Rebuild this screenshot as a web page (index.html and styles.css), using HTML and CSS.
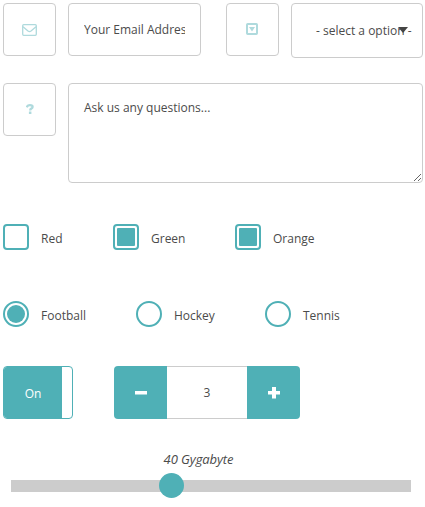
FILE: index.html
```html
<!DOCTYPE html>
<html lang="en">
<head>
<meta charset="utf-8">
<title>Form elements</title>
<link rel="stylesheet" href="styles.css">
</head>
<body>
<form class="form">
  <div class="row row-top">
    <div class="addon">
      <svg width="15" height="12" viewBox="0 0 15 12" fill="none" stroke="currentColor" stroke-width="1.300"><rect x=".7" y=".7" width="13.6" height="10.6" rx="1"/><path d="M1 2.7 6 7q1.500 1.200 3 0l5-4.300"/></svg>
    </div>
    <div class="field email"><span class="clip">Your Email Address</span></div>
    <div class="addon addon-select">
      <svg width="12" height="12" viewBox="0 0 12 12"><rect x="1" y="1" width="10" height="10" rx=".7" fill="none" stroke="currentColor" stroke-width="2"/><path d="M3 4h6L6 8.500z" fill="currentColor"/></svg>
    </div>
    <div class="field select"><span>- select a option -</span>
      <svg class="caret" width="10" height="6" viewBox="0 0 10 6"><path d="M0 0h10L5 6z" fill="currentColor"/></svg>
    </div>
  </div>
  <div class="row row-question">
    <div class="addon addon-help">
      <svg width="8" height="10" viewBox="0 0 8 10"><path d="M.7 3.200Q1.500 1.200 3.900 1.200q2.700 0 2.700 1.700 0 1.100-1.300 1.700-1.100.5-1.100 1.800" fill="none" stroke="currentColor" stroke-width="2.300"/><path d="M2.900 7.500h2.500V10H2.900z" fill="currentColor"/></svg>
    </div>
    <textarea class="field message">Ask us any questions...</textarea>
  </div>
  <div class="choices checks">
    <label class="choice"><span class="mark"></span>Red</label>
    <label class="choice"><span class="mark on"></span>Green</label>
    <label class="choice"><span class="mark on"></span>Orange</label>
  </div>
  <div class="choices radios">
    <label class="choice"><span class="mark on"></span>Football</label>
    <label class="choice"><span class="mark"></span>Hockey</label>
    <label class="choice"><span class="mark"></span>Tennis</label>
  </div>
  <div class="row controls">
    <div class="toggle"><span class="toggle-on">On</span></div>
    <div class="stepper">
      <div class="step"><svg width="12" height="12" viewBox="0 0 12 12"><path d="M0 4h12v3.500H0z" fill="currentColor"/></svg></div>
      <div class="value">3</div>
      <div class="step"><svg width="12" height="12" viewBox="0 0 12 12"><path d="M0 4h4V0h4v4h4v3.500H8V11.500H4V7.500H0z" fill="currentColor"/></svg></div>
    </div>
  </div>
  <div class="range">
    <div class="range-label">40 Gygabyte</div>
    <div class="track"><span class="thumb"></span></div>
  </div>
</form>
</body>
</html>
```
FILE: styles.css
```css
* { box-sizing: border-box; }

body {
  margin: 0;
  background: #fff;
  color: #4b4b4b;
  font: 12px/20px "Open Sans", sans-serif;
}

svg { display: block; }

.form { min-height: 507px; padding: 3px 2px 0 3px; }

.row { display: flex; align-items: flex-start; }
.row-top { height: 80px; }
.row-question { height: 141px; }

.addon {
  display: flex;
  align-items: center;
  justify-content: center;
  flex: none;
  width: 53px;
  height: 53px;
  margin-right: 12px;
  border: 1px solid #ccc;
  border-radius: 4px;
  color: #afdadd;
}
.addon-select { margin-left: 25px; padding: 0 1px 1px 0; }
.addon-help { padding-bottom: 1px; }

.field {
  border: 1px solid #ccc;
  border-radius: 4px;
  background: #fff;
}

.email { width: 133px; height: 53px; padding: 16px 15px; }
.clip { display: block; overflow: hidden; white-space: nowrap; }

.select {
  position: relative;
  width: 132px;
  height: 55px;
  padding: 17px 0 0 24px;
  white-space: nowrap;
}
.caret { position: absolute; top: 23px; right: 14px; color: #444; }

.message {
  display: block;
  width: 355px;
  height: 100px;
  margin: 0;
  padding: 14px 15px;
  color: inherit;
  font: inherit;
  outline: 0;
}

.choices { display: flex; height: 77px; }
.choice { display: flex; align-items: flex-start; line-height: 29px; }
.mark {
  width: 26px;
  height: 26px;
  margin-right: 12px;
  padding: 2px;
  border: 2px solid #4fb0b6;
  border-radius: 4px;
}
.mark.on::before {
  content: "";
  display: block;
  height: 18px;
  border-radius: 1px;
  background: #4fb0b6;
}
.checks .choice { width: 122px; }
.checks .choice:first-child { width: 110px; }
.radios { height: 65px; }
.radios .choice { width: 129px; }
.radios .choice:first-child { width: 133px; }
.radios .mark, .radios .mark::before { border-radius: 50%; }

.controls { gap: 41px; }
.toggle {
  width: 70px;
  height: 53px;
  border: 1px solid #4fb0b6;
  border-radius: 4px;
  overflow: hidden;
}
.toggle-on {
  display: block;
  width: 58px;
  height: 51px;
  background: #4fb0b6;
  color: #fff;
  line-height: 53px;
  text-align: center;
}

.stepper {
  display: flex;
  width: 186px;
  height: 53px;
  border-radius: 4px;
  overflow: hidden;
}
.step {
  display: flex;
  align-items: center;
  justify-content: center;
  width: 53px;
  background: #4fb0b6;
  color: #fff;
}
.value {
  width: 80px;
  border: solid #ccc;
  border-width: 1px 0;
  line-height: 51px;
  text-align: center;
}

.range { width: 400px; margin: 30px 0 0 8px; }
.range-label {
  width: 375px;
  height: 31px;
  font-size: 13px;
  font-style: italic;
  letter-spacing: -.1px;
  text-align: center;
}
.track { position: relative; height: 12px; background: #ccc; }
.thumb {
  position: absolute;
  top: -7px;
  left: 148px;
  width: 25px;
  height: 25px;
  border-radius: 50%;
  background: #4fb0b6;
}
```
